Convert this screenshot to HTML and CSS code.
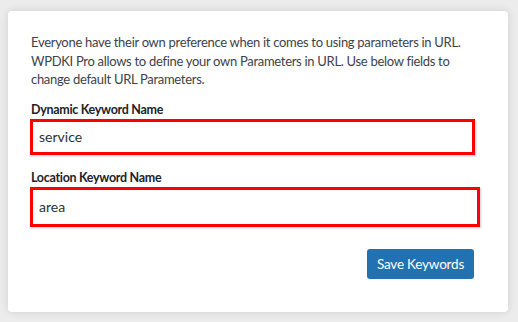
FILE: index.html
```html
<!DOCTYPE html>
<html lang="en">
<head>
  <meta charset="UTF-8">
  <title>URL Parameters</title>
  <link rel="stylesheet" href="styles.css">
</head>
<body>
  <div class="card">
    <p class="intro">Everyone have their own preference when it comes to using parameters in URL. WPDKI Pro allows to define your own Parameters in URL. Use below fields to change default URL Parameters.</p>

    <div class="field">
      <label class="field-label" for="dynamic-keyword">Dynamic Keyword Name</label>
      <input class="field-input" id="dynamic-keyword" type="text" value="service">
    </div>

    <div class="field">
      <label class="field-label" for="location-keyword">Location Keyword Name</label>
      <input class="field-input field-input-wide" id="location-keyword" type="text" value="area">
    </div>

    <div class="actions">
      <button class="btn-save" type="button">Save Keywords</button>
    </div>
  </div>
</body>
</html>
```

FILE: styles.css
```css
html {
  background: #ececec;
}

body {
  margin: 0;
  padding: 11px 10px 10px 8px;
  font-family: 'Lato', sans-serif;
  color: #3c434a;
}

.card {
  width: 500px;
  height: 301px;
  box-sizing: border-box;
  background: #fff;
  border-radius: 4px;
  box-shadow: 0 0 8px rgba(0, 0, 0, 0.12);
  padding: 22px 32px 0 23px;
}

.intro {
  max-width: 440px;
  margin: 0 0 12px;
  font-size: 13px;
  letter-spacing: -0.3px;
  line-height: 18.5px;
}

.field {
  display: flex;
  flex-direction: column;
  margin-bottom: 14px;
}

.field-label {
  font-size: 12.5px;
  font-weight: bold;
  letter-spacing: -0.3px;
  color: #1d2327;
  line-height: 17px;
  margin-bottom: 1px;
}

.field-input {
  width: 445px;
  height: 36px;
  box-sizing: border-box;
  margin-left: -1px;
  border: 3px solid #ff0000;
  border-radius: 0;
  padding: 0 6px;
  font-family: 'Lato', sans-serif;
  font-size: 14px;
  color: #2c3338;
  background: #fff;
  box-shadow: 1px 1px 2px rgba(0, 0, 0, 0.2);
  outline: none;
}

.field-input-wide {
  width: 450px;
  height: 40px;
}

.actions {
  display: flex;
  justify-content: flex-end;
  padding-right: 2px;
  margin-top: 22px;
}

.btn-save {
  width: 107px;
  height: 30px;
  background: #2271b1;
  color: #fff;
  border: 0;
  border-radius: 3px;
  font-family: 'Lato', sans-serif;
  font-size: 13.5px;
  letter-spacing: -0.2px;
  padding: 0;
}
```
